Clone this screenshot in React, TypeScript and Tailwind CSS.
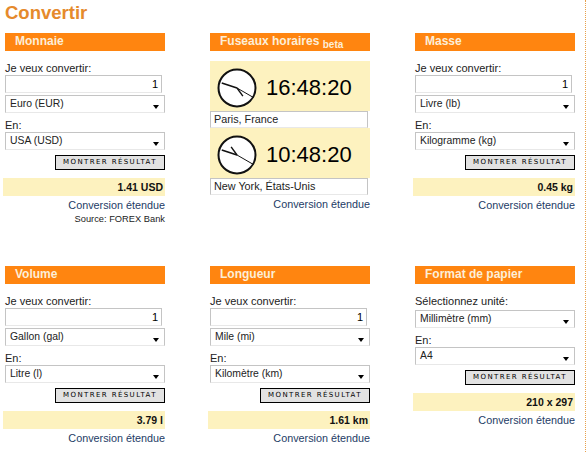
import { ReactNode } from "react";

const LINK_LABEL = "Conversion étendue";

function Header({ children }: { children: ReactNode }) {
  return (
    <div className="h-[18px] bg-[#ff8510] pl-[10px] text-[12px] font-bold leading-[17px] text-[#fdeed8]">
      {children}
    </div>
  );
}

function Amount() {
  return (
    <div className="h-[18px] w-[157px] border border-[#c4c4c4] border-b-[#e8e8e8] bg-white pr-[3px] text-right text-[11px] leading-[16px] text-black">
      1
    </div>
  );
}

function Select({ value }: { value: string }) {
  return (
    <div className="relative h-[18px] border border-[#c4c4c4] border-b-[#e8e8e8] bg-white pl-[4px] text-[10.4px] leading-[16px] text-[#222]">
      {value}
      <span className="absolute right-[5px] top-[9px] h-0 w-0 border-x-[3.5px] border-t-[4px] border-x-transparent border-t-black" />
    </div>
  );
}

function Button() {
  return (
    <div className="mt-[5px] flex justify-end">
      <div className="h-[15px] w-[110px] border border-black bg-[#e2e2e2] text-center font-['DejaVu_Sans'] text-[7px] leading-[13px] tracking-[1.4px] text-black">
        MONTRER RÉSULTAT
      </div>
    </div>
  );
}

function Result({ value }: { value: string }) {
  return (
    <div className="ml-[-2px] mt-[8px] h-[18px] bg-[#fdf2bf] pr-[2px] text-right text-[10.5px] font-bold leading-[18px] text-[#111]">
      {value}
    </div>
  );
}

function Link() {
  return <div className="mt-[3px] text-right text-[10.8px] leading-[13px] text-[#1d3c66]">{LINK_LABEL}</div>;
}

function Converter({
  title,
  from,
  to,
  result,
  source,
}: {
  title: string;
  from: string;
  to: string;
  result: string;
  source?: string;
}) {
  return (
    <div>
      <Header>{title}</Header>
      <div className="mt-[10px] text-[11px] leading-[14px] text-[#222]">Je veux convertir:</div>
      <Amount />
      <div className="mt-[2px]">
        <Select value={from} />
      </div>
      <div className="mt-[5px] text-[11px] leading-[14px] text-[#222]">En:</div>
      <Select value={to} />
      <Button />
      <Result value={result} />
      <Link />
      {source && <div className="mt-[1px] text-right text-[9.3px] leading-[12px] text-[#222]">{source}</div>}
    </div>
  );
}

function Clock({ hour, minute, second }: { hour: number; minute: number; second: number }) {
  const hand = (deg: number, len: number) => {
    const r = (deg * Math.PI) / 180;
    return { x2: 21 + Math.sin(r) * len, y2: 21 - Math.cos(r) * len };
  };
  const hourAngle = ((hour % 12) + minute / 60) * 30;
  return (
    <svg width="42" height="42" viewBox="0 0 42 42" className="shrink-0">
      <circle cx="21" cy="21" r="18.5" fill="white" stroke="#111" strokeWidth="2" />
      <line x1="21" y1="21" {...hand(hourAngle, 10)} stroke="#111" strokeWidth="1.4" />
      <line x1="21" y1="21" {...hand(minute * 6, 16)} stroke="#111" strokeWidth="1.6" />
      <line x1="21" y1="21" {...hand(second * 6, 19)} stroke="#111" strokeWidth="1" />
    </svg>
  );
}

function ZoneClock({ time, hour, city }: { time: string; hour: number; city: string }) {
  return (
    <div>
      <div className="flex h-[50px] items-center gap-[8px] bg-[#fdf2bf] pl-[6px] pt-[4px] text-[22px] leading-none text-black">
        <Clock hour={hour} minute={48} second={20} />
        <span>{time}</span>
      </div>
      <div className="h-[17px] w-[158px] border border-[#c4c4c4] border-b-[#e8e8e8] bg-white pl-[3px] text-[10.8px] leading-[15px] text-[#222]">
        {city}
      </div>
    </div>
  );
}

function TimeZones() {
  return (
    <div>
      <Header>
        Fuseaux horaires <span className="relative top-[3px] text-[10px]">beta</span>
      </Header>
      <div className="mt-[10px]">
        <ZoneClock time="16:48:20" hour={16} city="Paris, France" />
        <ZoneClock time="10:48:20" hour={10} city="New York, États-Unis" />
      </div>
      <Link />
    </div>
  );
}

function PaperFormat() {
  return (
    <div>
      <Header>Format de papier</Header>
      <div className="mt-[10px] text-[11px] leading-[14px] text-[#222]">Sélectionnez unité:</div>
      <div className="mt-[2px]">
        <Select value="Millimètre (mm)" />
      </div>
      <div className="mt-[5px] text-[11px] leading-[14px] text-[#222]">En:</div>
      <Select value="A4" />
      <Button />
      <Result value="210 x 297" />
      <Link />
    </div>
  );
}

export default function App() {
  return (
    <div className="h-[452px] w-[586px] overflow-hidden border-r border-dotted border-[#e8a04a] bg-white pl-[5px] font-['Liberation_Sans',Arial,sans-serif]">
      <h1 className="h-[33px] pt-[3px] text-[18.5px] font-bold leading-[20px] text-[#e58a2c]">Convertir</h1>
      <div className="grid grid-cols-[160px_160px_160px] grid-rows-[233px_auto] gap-x-[45px]">
        <Converter title="Monnaie" from="Euro (EUR)" to="USA (USD)" result="1.41 USD" source="Source: FOREX Bank" />
        <TimeZones />
        <Converter title="Masse" from="Livre (lb)" to="Kilogramme (kg)" result="0.45 kg" />
        <Converter title="Volume" from="Gallon (gal)" to="Litre (l)" result="3.79 l" />
        <Converter title="Longueur" from="Mile (mi)" to="Kilomètre (km)" result="1.61 km" />
        <PaperFormat />
      </div>
    </div>
  );
}
